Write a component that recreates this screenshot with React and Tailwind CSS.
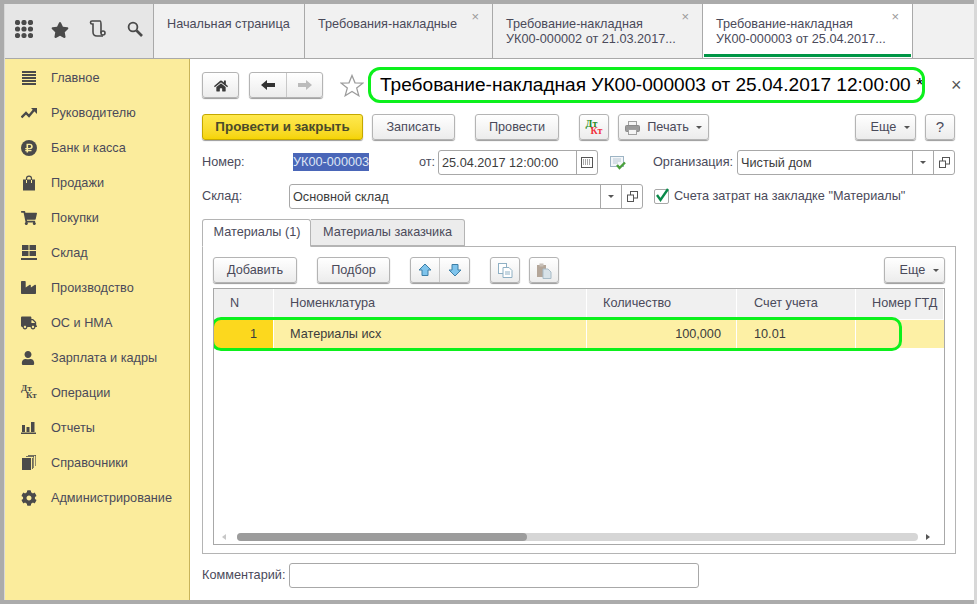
import React from "react";
import { FaCog, FaTruck, FaUser, FaIndustry, FaShoppingCart, FaHome, FaStar, FaRubleSign } from "react-icons/fa";

const font = { fontFamily: '"Liberation Sans", Arial, sans-serif' };

const Lines = () => (
  <svg width="16" height="14" viewBox="0 0 16 14" fill="#4a4a4a">
    <rect x="1" y="0" width="14" height="2" /><rect x="1" y="3" width="14" height="2" /><rect x="1" y="6" width="14" height="2" /><rect x="1" y="9" width="14" height="2" /><rect x="1" y="12" width="14" height="2" />
  </svg>
);
const Trend = () => (
  <svg width="16" height="12" viewBox="0 0 16 12" fill="none" stroke="#4a4a4a" strokeWidth="2.4">
    <path d="M0.5 10.5 L5 6 L8 9 L13 3" /><path d="M10 1 H16 V7 Z" fill="#4a4a4a" stroke="none" />
  </svg>
);
const Rouble = () => (
  <span className="w-[16px] h-[16px] rounded-full bg-[#4a4a4a] flex items-center justify-center">
    <FaRubleSign size={10} color="#fbec9c" />
  </span>
);
const Bag = () => (
  <svg width="14" height="16" viewBox="0 0 14 16" className="ml-[1px]">
    <rect x="1" y="4.5" width="12" height="11" fill="#4a4a4a" />
    <path d="M4.5 8 V3.5 C4.5 0.2 9.5 0.2 9.5 3.5 V8" fill="none" stroke="#4a4a4a" strokeWidth="1.2" />
    <path d="M4.5 5 V8 M9.5 5 V8" stroke="#fbec9c" strokeWidth="1" />
  </svg>
);
const Stock = () => (
  <svg width="16" height="15" viewBox="0 0 16 15" fill="#4a4a4a">
    <rect x="1" y="0" width="6.5" height="5" /><rect x="8.5" y="0" width="6.5" height="5" /><rect x="1" y="6" width="6.5" height="5" /><rect x="8.5" y="6" width="6.5" height="5" /><rect x="0" y="13" width="16" height="2" />
  </svg>
);
const DtKt = ({ a = "#4a4a4a", b = "#4a4a4a", size = "text-[9px]" }) => (
  <span className={`relative block w-[17px] h-[15px] font-bold ${size} leading-[7px]`} style={{ fontFamily: '"Liberation Serif", serif' }}>
    <span className="absolute left-0 top-0" style={{ color: a }}>Дт</span>
    <span className="absolute left-[5px] top-[7px]" style={{ color: b }}>Кт</span>
  </span>
);
const Bars = () => (
  <svg width="15" height="12" viewBox="0 0 15 12" fill="#4a4a4a">
    <rect x="1" y="3" width="3" height="7" /><rect x="5.5" y="5" width="3" height="5" /><rect x="10" y="0" width="3.5" height="10" /><rect x="0" y="10.5" width="15" height="1.5" />
  </svg>
);
const Books = () => (
  <svg width="14" height="15" viewBox="0 0 14 15" fill="#4a4a4a" className="ml-[1px]">
    <rect x="0" y="3" width="9" height="12" />
    <path d="M10 3 H10.8 V14 H10 Z M4 1 H12 V13 H11.4 V1.8 H4 Z M6 0 H14 V11 H13.4 V0.7 H6 Z" />
  </svg>
);
const Search = () => (
  <svg width="16" height="16" viewBox="0 0 16 16" fill="none" stroke="#4a4a4a" className="ml-[21px]">
    <circle cx="6" cy="6" r="4.4" strokeWidth="1.8" />
    <path d="M9.5 9.5 L15 15" strokeWidth="2.6" />
  </svg>
);
const LeftArrow = ({ color }) => (
  <svg width="14" height="10" viewBox="0 0 14 10" fill={color}><path d="M0 5 L6 0 V3 H14 V7 H6 V10 Z" /></svg>
);
const RightArrow = ({ color }) => (
  <svg width="14" height="10" viewBox="0 0 14 10" fill={color}><path d="M14 5 L8 0 V3 H0 V7 H8 V10 Z" /></svg>
);
const OutlineStar = () => (
  <svg width="24" height="23" viewBox="0 0 24 23" fill="#fff" stroke="#9c9c9c" strokeWidth="1.3" className="ml-[17px] shrink-0">
    <path d="M12 1.5 L15 8.8 L22.8 9.2 L16.7 14.1 L18.8 21.7 L12 17.5 L5.2 21.7 L7.3 14.1 L1.2 9.2 L9 8.8 Z" />
  </svg>
);
const Printer = () => (
  <svg width="15" height="14" viewBox="0 0 15 14">
    <rect x="3.5" y="0.5" width="8" height="5" fill="#f4f4f4" stroke="#a0a0a0" />
    <rect x="0.5" y="4.5" width="14" height="6" rx="1" fill="#9a9a9a" stroke="#8a8a8a" />
    <rect x="3.5" y="8.5" width="8" height="5" fill="#f4f4f4" stroke="#a0a0a0" />
  </svg>
);

const menu = [
  ["Главное", <Lines />],
  ["Руководителю", <Trend />],
  ["Банк и касса", <Rouble />],
  ["Продажи", <Bag />],
  ["Покупки", <FaShoppingCart size={16} color="#4a4a4a" />],
  ["Склад", <Stock />],
  ["Производство", <FaIndustry size={15} color="#4a4a4a" />],
  ["ОС и НМА", <FaTruck size={16} color="#4a4a4a" />],
  ["Зарплата и кадры", <FaUser size={14} color="#4a4a4a" />],
  ["Операции", <DtKt />],
  ["Отчеты", <Bars />],
  ["Справочники", <Books />],
  ["Администрирование", <FaCog size={16} color="#4a4a4a" />],
];

const Caret = () => <span className="inline-block w-0 h-0 border-x-[3px] border-x-transparent border-t-[3px] border-t-[#555]" />;

const Btn = ({ w, className = "", children }) => (
  <div className={`${w} h-[26px] shrink-0 flex items-center justify-center rounded-[3px] border border-[#b4b4b4] bg-linear-to-b from-white to-[#ececec] shadow-[0_1px_1px_#9a9a9a] text-[#4a4a5a] pt-[1px] ${className}`}>
    {children}
  </div>
);

const Field = ({ w, className = "", children, buttons = [] }) => (
  <div className={`${w} h-[25px] shrink-0 flex rounded-[3px] border border-[#a8a8a8] bg-white ${className}`}>
    <div className="flex-1 px-[3px] leading-[24px] text-[#3c3c3c] truncate">{children}</div>
    {buttons.map((b, i) => (
      <div key={i} className="w-[21px] border-l border-[#a8a8a8] flex items-center justify-center">{b}</div>
    ))}
  </div>
);

const OpenIcon = () => (
  <svg width="11" height="11" viewBox="0 0 11 11" fill="none" stroke="#555"><rect x="3.5" y="0.5" width="7" height="6.5" /><rect x="0.5" y="4" width="6" height="6.5" fill="#fff" /></svg>
);
const CalIcon = () => (
  <svg width="12" height="11" viewBox="0 0 12 11" fill="none" stroke="#555"><rect x="0.5" y="0.5" width="11" height="10" /><path d="M2 3h8M2 5h8M2 7h8" strokeDasharray="1 1" /></svg>
);
const DocCheck = () => (
  <svg width="16" height="14" viewBox="0 0 16 14"><rect x="0.5" y="0.5" width="13" height="10" fill="#f4f7fa" stroke="#9db4c4" /><path d="M3 3h8M3 5h8M3 7h5" stroke="#b8c8d4" /><path d="M7 9l2.5 3L15 6.5" fill="none" stroke="#4aa03c" strokeWidth="2.4" /></svg>
);
const ArrowUp = () => (
  <svg width="14" height="14" viewBox="0 0 14 14"><path d="M7 1 L13 7 H10 V12.5 H4 V7 H1 Z" fill="#7fc4ec" stroke="#3d7ea6" /></svg>
);
const ArrowDown = () => (
  <svg width="14" height="14" viewBox="0 0 14 14"><path d="M7 13 L13 7 H10 V1.5 H4 V7 H1 Z" fill="#7fc4ec" stroke="#3d7ea6" /></svg>
);
const CopyIcon = () => (
  <svg width="15" height="15" viewBox="0 0 15 15" fill="#fff" stroke="#8fb0c4"><rect x="0.5" y="0.5" width="8" height="10" /><path d="M5 4.5h6l3 3v7H5z" /><path d="M7 9h5M7 11h5" /></svg>
);
const PasteIcon = () => (
  <svg width="16" height="16" viewBox="0 0 16 16"><rect x="1" y="2" width="9" height="12" fill="#b4a699" /><rect x="3.5" y="0.5" width="4" height="3" fill="#c8c0b8" /><path d="M7 6h5l3 3v6.5H7z" fill="#d8e2e8" stroke="#a8bcc8" /></svg>
);

const cols = [
  ["w-[60px]", "N", "pl-[16px]"],
  ["w-[313px]", "Номенклатура", "pl-[16px]"],
  ["w-[150px]", "Количество", "pl-[16px]"],
  ["w-[119px]", "Счет учета", "pl-[17px]"],
  ["flex-1", "Номер ГТД", "pl-[16px]"],
];

const Tab = ({ w, active, close, children }) => (
  <div className={`${w} h-[54px] shrink-0 relative border-r border-[#a9a9a9] ${active ? "bg-white" : "bg-[#f1f1f1]"} pl-[13px] pt-[13px] leading-[15px] text-[#4a4a5a]`}>
    {children}
    {close && <span className="absolute right-[13px] top-[6px] text-[13px] leading-[13px] text-[#9a9a9a]">×</span>}
    {active && <div className="absolute left-[1px] right-[1px] bottom-[1px] h-[3px] bg-[#009646]" />}
  </div>
);

export default function App() {
  return (
    <div style={font} className="w-[977px] h-[604px] overflow-hidden bg-[#ababab] border-r-[3px] border-r-[#d8d8d8] pt-[4px] pl-[4px] pb-[4px] text-[12.7px]">
      <div className="h-full flex flex-col bg-white border-l border-[#d8d8d8]">
        {/* верхняя панель */}
        <div className="h-[55px] shrink-0 flex border-b border-[#a9a9a9]">
          <div className="w-[149px] shrink-0 bg-[#e6e6e6] border-r border-[#a9a9a9] flex items-center pl-[10px] pb-[5px]">
            <svg width="18" height="18" viewBox="0 0 18 18" fill="#4a4a4a">
              {[2.5, 9, 15.5].map((y) => [2.5, 9, 15.5].map((x) => <circle key={`${x}-${y}`} cx={x} cy={y} r="2.6" />))}
            </svg>
            <FaStar size={18} color="#4a4a4a" className="ml-[18px] mt-[2px]" />
            <svg width="17" height="17" viewBox="0 0 17 17" fill="none" stroke="#4a4a4a" strokeWidth="1.6" className="ml-[20px]">
              <path d="M3 1 H11 C12 1 12 3 12 5 V13" /><path d="M3 1 C1 1 1 4 3 4 H4 V12 C4 15 6 16 8 16 H14" /><circle cx="14" cy="13" r="2" />
            </svg>
            <Search />
          </div>
          <Tab w="w-[151px]">Начальная страница</Tab>
          <Tab w="w-[188px]" close>Требования-накладные</Tab>
          <Tab w="w-[210px]" close>Требование-накладная<br />УК00-000002 от 21.03.2017...</Tab>
          <Tab w="w-[210px]" active close>Требование-накладная<br />УК00-000003 от 25.04.2017...</Tab>
          <div className="flex-1 bg-[#f1f1f1]" />
        </div>

        <div className="flex-1 flex min-h-0">
          {/* разделы */}
          <div className="w-[185px] shrink-0 bg-[#fbec9c] border-r border-[#c8b45a] pt-[1px]">
            {menu.map(([label, icon]) => (
              <div key={label} className="h-[35px] flex items-center text-[#4a4a5a]">
                <span className="w-[46px] pl-[16px] flex items-center justify-start">{icon}</span>
                <span className="pt-[2px]">{label}</span>
              </div>
            ))}
          </div>

          {/* форма */}
          <div className="flex-1 min-w-0 pl-[12px] pr-[18px] pt-[8px] text-[#4a4a5a]">
            <div className="h-[36px] flex items-center">
              <Btn w="w-[37px]"><FaHome size={14} color="#3a3a3a" /></Btn>
              <div className="ml-[10px] w-[74px] h-[26px] shrink-0 flex rounded-[3px] border border-[#b4b4b4] bg-linear-to-b from-white to-[#ececec] shadow-[0_1px_1px_#9a9a9a]">
                <div className="w-[37px] border-r border-[#c8c8c8] flex items-center justify-center"><LeftArrow color="#333" /></div>
                <div className="flex-1 flex items-center justify-center"><RightArrow color="#bbb" /></div>
              </div>
              <OutlineStar />
              <div className="ml-[4px] w-[557px] h-[36px] shrink-0 rounded-[12px] border-[3px] border-[#0cf01c] pl-[9px] leading-[30px] text-[19.1px] text-black whitespace-nowrap overflow-hidden">
                Требование-накладная УК00-000003 от 25.04.2017 12:00:00 *
              </div>
              <span className="ml-[26px] shrink-0 text-[18px] leading-none text-[#555]">×</span>
            </div>

            <div className="mt-[11px] flex">
              <div className="w-[161px] h-[26px] shrink-0 flex items-center justify-center rounded-[3px] border border-[#c4a800] bg-linear-to-b from-[#ffe94d] to-[#f5d400] shadow-[0_1px_1px_#9a9a9a] pt-[1px] font-bold text-[13.4px] text-[#4a4a2a]">Провести и закрыть</div>
              <Btn w="w-[83px]" className="ml-[9px]">Записать</Btn>
              <Btn w="w-[84px]" className="ml-[20px]">Провести</Btn>
              <Btn w="w-[30px]" className="ml-[20px]"><DtKt a="#1d8a1d" b="#f0323c" size="text-[10px]" /></Btn>
              <Btn w="w-[91px]" className="ml-[9px] gap-[7px]"><Printer />Печать<Caret /></Btn>
              <Btn w="w-[61px]" className="ml-[146px] gap-[8px] pl-[10px]">Еще<Caret /></Btn>
              <Btn w="w-[30px]" className="ml-[9px] text-[15px]">?</Btn>
            </div>

            <div className="mt-[10px] flex items-center h-[25px]">
              <span className="w-[91px] shrink-0 pt-[1px]">Номер:</span>
              <span className="w-[126px] shrink-0 pt-[1px]"><span className="bg-[#4a66b8] text-[#dfe6f5] py-[2px]">УК00-000003</span></span>
              <span className="w-[19px] shrink-0 pt-[1px]">от:</span>
              <Field w="w-[160px]" buttons={[<CalIcon />]}>25.04.2017 12:00:00</Field>
              <span className="w-[55px] shrink-0 pl-[12px]"><DocCheck /></span>
              <span className="w-[84px] shrink-0 pt-[1px] whitespace-nowrap">Организация:</span>
              <Field w="w-[218px]" buttons={[<Caret />, <OpenIcon />]}>Чистый дом</Field>
            </div>

            <div className="mt-[9px] flex items-center h-[25px]">
              <span className="w-[87px] shrink-0 pt-[1px]">Склад:</span>
              <Field w="w-[354px]" buttons={[<Caret />, <OpenIcon />]}>Основной склад</Field>
              <span className="relative ml-[11px] w-[15px] h-[15px] shrink-0 rounded-[2px] border border-[#a8a8a8] bg-white">
                <svg width="17" height="17" viewBox="0 0 17 17" className="absolute -left-[1px] -top-[3px]"><path d="M3 8l3.5 5L14 2" fill="none" stroke="#0a8a4a" strokeWidth="2.4" /></svg>
              </span>
              <span className="ml-[5px] pt-[1px] whitespace-nowrap">Счета затрат на закладке "Материалы"</span>
            </div>

            <div className="mt-[10px] flex h-[28px] relative z-10">
              <div className="w-[109px] h-[28px] border border-[#b4b4b4] border-b-white rounded-t-[3px] bg-white flex items-center justify-center pl-[1px]">Материалы (1)</div>
              <div className="w-[154px] h-[27px] border border-l-0 border-[#b4b4b4] rounded-tr-[3px] bg-[#ececec] flex items-center justify-center">Материалы заказчика</div>
            </div>

            <div className="-mt-[1px] h-[308px] border border-[#b4b4b4] px-[10px] pt-[10px]">
              <div className="flex h-[26px]">
                <Btn w="w-[84px]">Добавить</Btn>
                <Btn w="w-[73px]" className="ml-[20px]">Подбор</Btn>
                <div className="ml-[20px] w-[60px] h-[26px] flex rounded-[3px] border border-[#b4b4b4] bg-linear-to-b from-white to-[#ececec] shadow-[0_1px_1px_#9a9a9a]">
                  <div className="w-[29px] border-r border-[#c8c8c8] flex items-center justify-center"><ArrowUp /></div>
                  <div className="flex-1 flex items-center justify-center"><ArrowDown /></div>
                </div>
                <Btn w="w-[30px]" className="ml-[20px]"><CopyIcon /></Btn>
                <Btn w="w-[30px]" className="ml-[9px]"><PasteIcon /></Btn>
                <Btn w="w-[61px]" className="ml-auto gap-[8px] pl-[10px]">Еще<Caret /></Btn>
              </div>

              <div className="relative mt-[5px] h-[257px] border border-[#a8a8a8] overflow-hidden">
                <div className="flex h-[31px] bg-[#f0f0f0] border-b border-white">
                  {cols.map(([w, t, p]) => (
                    <div key={t} className={`${w} ${p} shrink-0 border-r border-white leading-[29px] whitespace-nowrap`}>{t}</div>
                  ))}
                </div>
                <div className="flex h-[28px] bg-[#fdf0a5] leading-[28px] text-[#3c3c3c]">
                  <div className="w-[60px] shrink-0 bg-[#fcd81e] border-r border-white pr-[16px] text-right">1</div>
                  <div className="w-[313px] shrink-0 border-r border-white pl-[16px]">Материалы исх</div>
                  <div className="w-[150px] shrink-0 border-r border-white pr-[15px] text-right">100,000</div>
                  <div className="w-[119px] shrink-0 border-r border-white pl-[17px]">10.01</div>
                </div>
                {/* выделение поверх строки */}
                <div className="absolute -left-[3px] top-[28px] w-[691px] h-[34px] rounded-[10px] border-[3px] border-[#0cf01c]" />
                <div className="absolute left-[8px] right-[14px] bottom-[3px] h-[8px] flex items-center">
                  <span className="w-0 h-0 border-y-[3px] border-y-transparent border-r-[4px] border-r-[#c8c8c8]" />
                  <div className="ml-[11px] flex-1 h-[8px] rounded-full bg-[#d6d6d6]">
                    <div className="w-[290px] h-[8px] rounded-full bg-[#9c9c9c]" />
                  </div>
                  <span className="ml-[8px] w-0 h-0 border-y-[3px] border-y-transparent border-l-[4px] border-l-[#555]" />
                </div>
              </div>
            </div>

            <div className="mt-[9px] flex items-center h-[25px]">
              <span className="w-[87px] shrink-0 pt-[1px]">Комментарий:</span>
              <Field w="w-[410px]" />
            </div>
          </div>
        </div>
      </div>
    </div>
  );
}
